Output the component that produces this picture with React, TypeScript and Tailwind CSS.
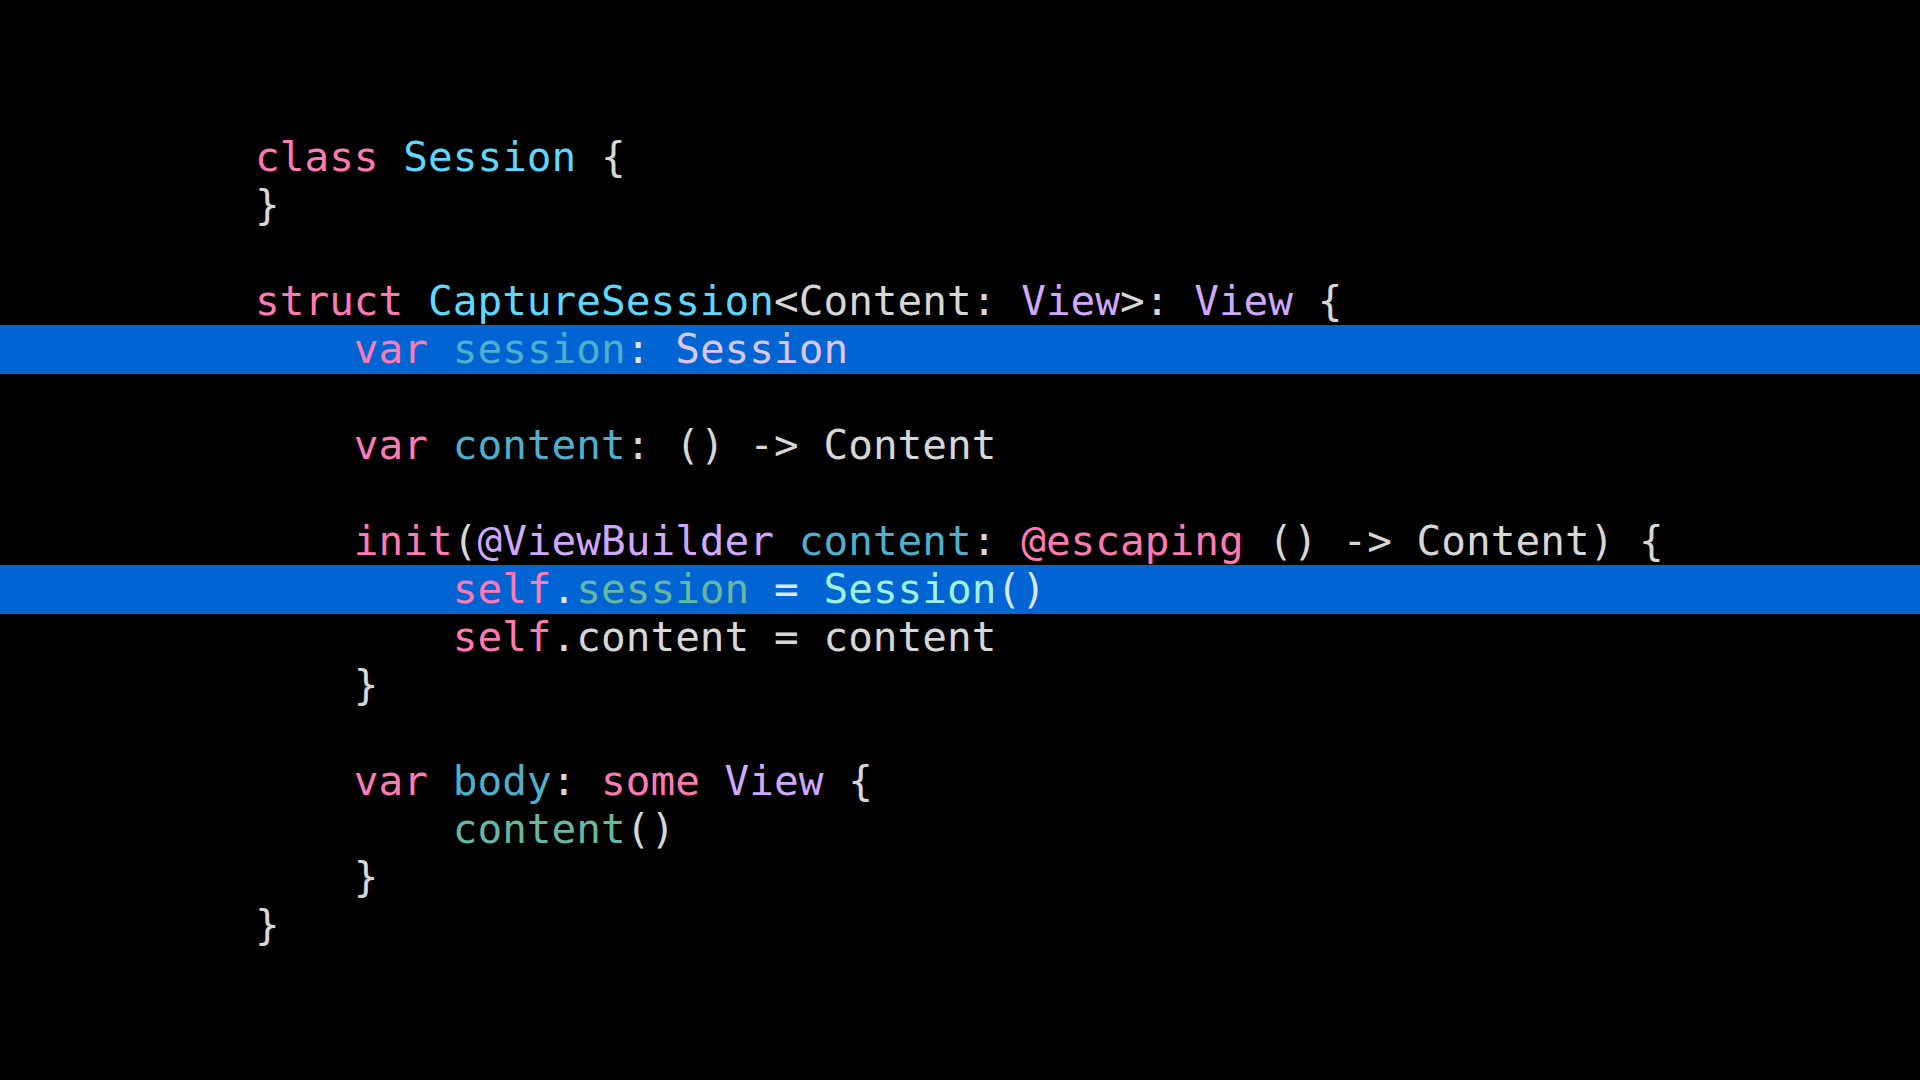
import React from "react";

type Tok = [string, string];

const K = "text-[#ff7ab2]"; // keyword
const T = "text-[#5dd8ff]"; // type declaration
const O = "text-[#d0a8ff]"; // other type
const D = "text-[#4eb0cc]"; // other declaration
const P = "text-[#67b7a4]"; // project property / func
const C = "text-[#9ef1dd]"; // project type
const W = "text-[#ffffffd9]"; // plain

const lines: { toks: Tok[]; hl?: boolean }[] = [
  { toks: [["class", K], [" ", W], ["Session", T], [" {", W]] },
  { toks: [["}", W]] },
  { toks: [] },
  {
    toks: [
      ["struct", K],
      [" ", W],
      ["CaptureSession", T],
      ["<Content: ", W],
      ["View", O],
      [">: ", W],
      ["View", O],
      [" {", W],
    ],
  },
  {
    hl: true,
    toks: [["    ", W], ["var", K], [" ", W], ["session", D], [": ", W], ["Session", "text-[#d9c6ff]"]],
  },
  { toks: [] },
  { toks: [["    ", W], ["var", K], [" ", W], ["content", D], [": () -> Content", W]] },
  { toks: [] },
  {
    toks: [
      ["    ", W],
      ["init", K],
      ["(", W],
      ["@ViewBuilder", O],
      [" ", W],
      ["content", D],
      [": ", W],
      ["@escaping", K],
      [" () -> Content) {", W],
    ],
  },
  {
    hl: true,
    toks: [["        ", W], ["self", K], [".", W], ["session", P], [" = ", W], ["Session", C], ["()", W]],
  },
  { toks: [["        ", W], ["self", K], [".content = content", W]] },
  { toks: [["    }", W]] },
  { toks: [] },
  {
    toks: [
      ["    ", W],
      ["var", K],
      [" ", W],
      ["body", D],
      [": ", W],
      ["some", K],
      [" ", W],
      ["View", O],
      [" {", W],
    ],
  },
  { toks: [["        ", W], ["content", P], ["()", W]] },
  { toks: [["    }", W]] },
  { toks: [["}", W]] },
];

export default function App() {
  return (
    <div
      className="w-[1920px] h-[1080px] bg-black overflow-hidden pt-[133px]"
      style={{ fontFamily: '"DejaVu Sans Mono", monospace' }}
    >
      {lines.map((l, i) => (
        <div
          key={i}
          className={
            l.hl
              ? "relative h-[49px] mb-[-1px] leading-[48px] pl-[255px] whitespace-pre text-[41px] tracking-[0.03px] bg-[#0064d3]"
              : "relative h-[48px] leading-[48px] pl-[255px] whitespace-pre text-[41px] tracking-[0.03px]"
          }
        >
          {l.toks.map((t, j) => (
            <span key={j} className={t[1]}>
              {t[0]}
            </span>
          ))}
        </div>
      ))}
    </div>
  );
}
